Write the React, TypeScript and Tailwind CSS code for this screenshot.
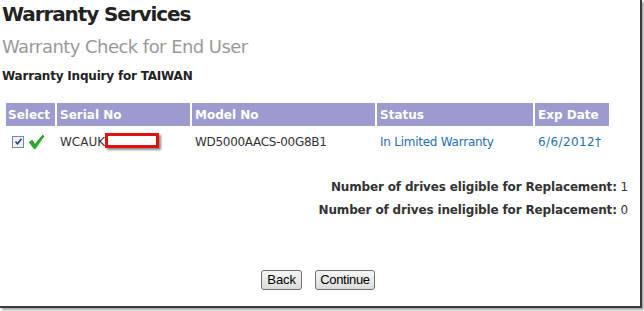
export default function App() {
  return (
    <div className="w-[644px] h-[311px] bg-white overflow-hidden" style={{ fontFamily: '"DejaVu Sans", Verdana, sans-serif' }}>
      <div className="relative w-[642px] h-[308px] bg-white border-r-2 border-b-2 border-[#3a3a3a] shadow-[2px_2px_2px_rgba(0,0,0,0.35)]">
        <h1 className="pl-[2px] pt-[2px] text-[20px] leading-[24px] font-bold text-[#222] tracking-[-1.1px]">Warranty Services</h1>
        <h2 className="pl-[2px] mt-[10px] text-[18px] leading-[22px] text-[#999] tracking-[-0.55px]">Warranty Check for End User</h2>
        <h3 className="pl-[2px] mt-[10px] text-[12px] leading-[16px] font-bold text-[#222] tracking-[-0.2px]">Warranty Inquiry for TAIWAN</h3>

        <table className="mt-[17px] ml-[4px] border-separate border-spacing-[2px] text-[12px] text-[#333]">
          <thead>
            <tr className="h-[23px] text-white font-bold text-left">
              <th className="w-[49px] bg-[#9d9acf] pl-[2px] font-bold">Select</th>
              <th className="w-[133px] bg-[#9d9acf] pl-[3px] font-bold">Serial No</th>
              <th className="w-[183px] bg-[#9d9acf] pl-[3px] font-bold">Model No</th>
              <th className="w-[156px] bg-[#9d9acf] pl-[3px] font-bold">Status</th>
              <th className="w-[74px] bg-[#9d9acf] pl-[3px] font-bold">Exp Date</th>
            </tr>
          </thead>
          <tbody>
            <tr className="h-[27px]">
              <td className="pl-[6px]">
                <div className="flex items-center gap-[4px]">
                  <span className="w-[12px] h-[12px] border border-[#7a8aa6] bg-[#eef2f8] flex items-center justify-center">
                    <svg width="9" height="9" viewBox="0 0 9 9">
                      <path d="M1.5 4.5 L3.5 6.8 L7.5 1.8" stroke="#2a3f8a" strokeWidth="1.6" fill="none" />
                    </svg>
                  </span>
                  <svg width="17" height="16" viewBox="0 0 16 15">
                    <path d="M1 8 L4 6 L6.5 10 L14 1 L15.5 2 L7 14 L5.5 14 Z" fill="#22b022" />
                    <path d="M1 8 L4 6 L6.5 10 L14 1" stroke="#0f7d0f" strokeWidth="0.8" fill="none" />
                  </svg>
                </div>
              </td>
              <td className="pl-[3px]">
                <div className="flex items-center">
                  <span>WCAUK</span>
                  <span className="w-[54px] h-[15px] -mt-[2px] border-[3px] border-[#e01010] bg-white shadow-[2px_2px_2px_rgba(0,0,0,0.45)]" />
                </div>
              </td>
              <td className="pl-[3px] tracking-[-0.3px]">WD5000AACS-00G8B1</td>
              <td className="pl-[3px] text-[#1f6fb5] tracking-[-0.25px]">In Limited Warranty</td>
              <td className="pl-[3px] text-[#1f6fb5] tracking-[0.4px]">6/6/2012†</td>
            </tr>
          </tbody>
        </table>

        <div className="mt-[21px] pr-[12px] flex flex-col items-end gap-[5px] text-[12px] text-[#333] tracking-[-0.15px]">
          <div><span className="font-bold">Number of drives eligible for Replacement:</span> 1</div>
          <div><span className="font-bold">Number of drives ineligible for Replacement:</span> 0</div>
        </div>

        <div className="mt-[51px] flex justify-center gap-[13px] pr-[4px]" style={{ fontFamily: '"Liberation Sans", Arial, sans-serif' }}>
          <button className="h-[20px] px-[5px] text-[13px] leading-[16px] text-black border border-[#707070] rounded-[3px] bg-gradient-to-b from-[#f6f6f6] to-[#dcdcdc]">Back</button>
          <button className="h-[20px] px-[4px] text-[13px] leading-[16px] text-black border border-[#707070] rounded-[3px] bg-gradient-to-b from-[#f6f6f6] to-[#dcdcdc] tracking-[-0.3px]">Continue</button>
        </div>
      </div>
    </div>
  );
}
